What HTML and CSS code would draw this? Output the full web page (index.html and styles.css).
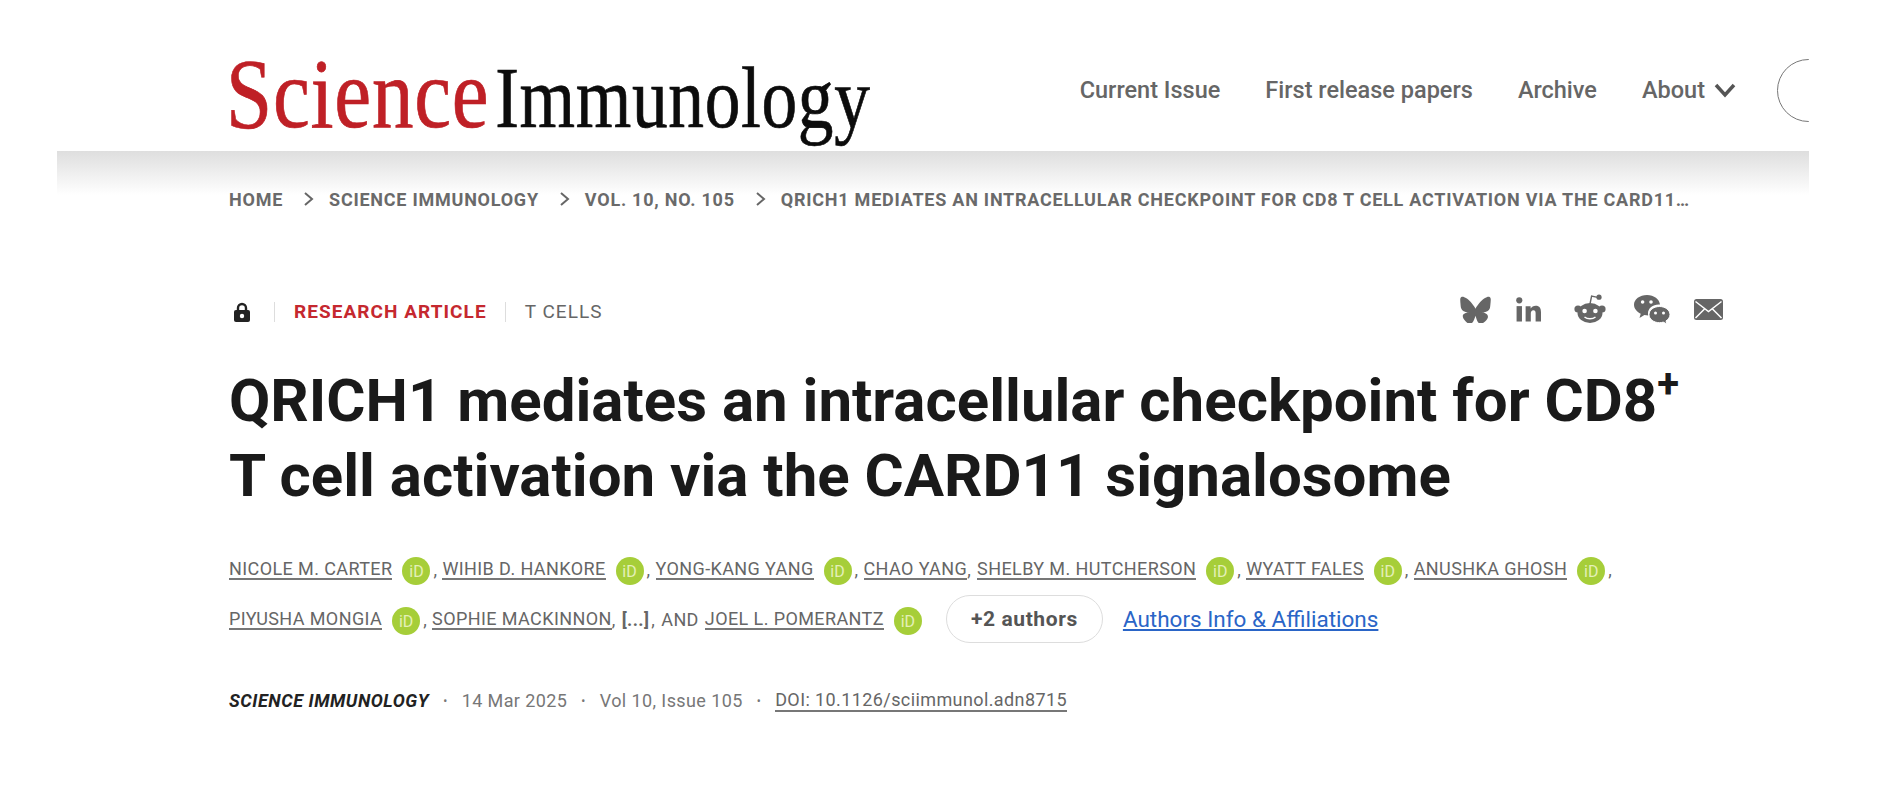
FILE: index.html
```html
<!DOCTYPE html>
<html lang="en">
<head>
  <meta charset="UTF-8">
  <title>QRICH1 mediates an intracellular checkpoint | Science Immunology</title>
  <link rel="stylesheet" href="styles.css">
</head>
<body>
  <div class="page">
    <header class="site-header">
      <a class="logo" href="#"><span class="logo-red">Science</span><span class="logo-black">Immunology</span></a>
      <nav class="main-nav">
        <a href="#">Current Issue</a>
        <a href="#">First release papers</a>
        <a href="#">Archive</a>
        <a href="#" class="nav-about">About
          <svg width="22" height="15" viewBox="0 0 22 15"><polyline points="2,2 11,12 20,2" fill="none" stroke="#555" stroke-width="3.5"/></svg>
        </a>
        <span class="nav-pill"></span>
      </nav>
    </header>

    <div class="crumbs">
      <a href="#">Home</a>
      <svg class="crumb-sep" width="12" height="16" viewBox="0 0 12 16"><polyline points="2,2 9,8 2,14" fill="none" stroke="#666" stroke-width="2"/></svg>
      <a href="#">Science Immunology</a>
      <svg class="crumb-sep" width="12" height="16" viewBox="0 0 12 16"><polyline points="2,2 9,8 2,14" fill="none" stroke="#666" stroke-width="2"/></svg>
      <a href="#">Vol. 10, No. 105</a>
      <svg class="crumb-sep" width="12" height="16" viewBox="0 0 12 16"><polyline points="2,2 9,8 2,14" fill="none" stroke="#666" stroke-width="2"/></svg>
      <span class="crumb-last">QRICH1 mediates an intracellular checkpoint for CD8 T cell activation via the CARD11…</span>
    </div>

    <main class="article">
      <div class="meta-row">
        <div class="tags">
          <svg class="lock" width="18" height="20" viewBox="0 0 18 20"><path d="M5 9V6a4 4 0 0 1 8 0v3" fill="none" stroke="#222" stroke-width="2.4"/><rect x="1" y="8" width="16" height="12" rx="2" fill="#222"/><circle cx="9" cy="14" r="2.2" fill="#fff"/></svg>
          <span class="tag tag-type">Research Article</span>
          <span class="tag tag-topic">T Cells</span>
        </div>
        <div class="share">
          <svg class="share-blue" width="31" height="28" viewBox="0 0 24 22"><path d="M12 10.8c-1.087-2.114-4.046-6.053-6.798-7.995C2.566.944 1.561 1.266.902 1.565.139 1.908 0 3.08 0 3.768c0 .69.378 5.65.624 6.479.815 2.736 3.713 3.66 6.383 3.364-3.912.58-7.387 2.005-2.83 7.078 5.013 5.19 6.87-1.113 7.823-4.308.953 3.195 2.05 9.271 7.733 4.308 4.267-4.308 1.172-6.498-2.74-7.078 2.67.297 5.568-.628 6.383-3.364.246-.828.624-5.79.624-6.479 0-.688-.139-1.861-.902-2.206-.659-.298-1.664-.62-4.3 1.24C16.046 4.748 13.087 8.687 12 10.8z" fill="#666"/></svg>
          <svg class="share-in" width="25" height="27" viewBox="0 0 26 27"><circle cx="3.4" cy="4" r="3.2" fill="#666"/><rect x=".6" y="10" width="5.6" height="16" fill="#666"/><path d="M10 10h5.2v2.4c1-1.7 3-2.9 5.2-2.9 4.2 0 5.6 2.7 5.6 6.8V26h-5.600v-8.600c0-2-.6-3.200-2.300-3.200-1.900 0-2.700 1.400-2.700 3.400V26H10z" fill="#666"/></svg>
          <svg class="share-reddit" width="32" height="30" viewBox="0 0 32 30"><circle cx="4" cy="15" r="3.600" fill="#666"/><circle cx="28" cy="15" r="3.600" fill="#666"/><ellipse cx="16" cy="19" rx="12.500" ry="10" fill="#666"/><path d="M16 10l1.600-8 6 1.400" fill="none" stroke="#666" stroke-width="1.400"/><circle cx="25" cy="3.200" r="2.600" fill="#666"/><circle cx="10.600" cy="17" r="2.300" fill="#fff"/><circle cx="21.400" cy="17" r="2.300" fill="#fff"/><path d="M10.500 23c3 2.400 8 2.400 11 0" fill="none" stroke="#fff" stroke-width="1.500"/></svg>
          <svg class="share-wechat" width="36" height="29" viewBox="0 0 36 29"><path d="M13 0c7 0 12.500 4.300 13 9.600-6.500-.6-12 3.400-12 8.900 0 .8.100 1.400.300 2.100-1.400 0-2.700-.2-3.900-.5L5.500 23l1.200-4.200C2.700 16.700 0 13.500 0 9.800 0 4.400 5.800 0 13 0z" fill="#666"/><path d="M25.500 11.500c5.800 0 10.500 3.600 10.500 8.100 0 2.600-1.600 4.800-4 6.300l.9 3.100-3.700-1.900c-1.200.4-2.400.6-3.700.6-5.800 0-10.500-3.600-10.500-8.100s4.700-8.100 10.500-8.100z" fill="#666" stroke="#fff" stroke-width="1"/><circle cx="8.600" cy="7" r="1.800" fill="#fff"/><circle cx="17" cy="7" r="1.800" fill="#fff"/><circle cx="21.500" cy="18" r="1.500" fill="#fff"/><circle cx="29.500" cy="18" r="1.500" fill="#fff"/></svg>
          <svg class="share-mail" width="29" height="21" viewBox="0 0 29 21"><rect width="29" height="21" rx="2.500" fill="#666"/><path d="M1.500 2.500l13 10 13-10M1.500 19l9-9M27.500 19l-9-9" fill="none" stroke="#fff" stroke-width="1.500"/></svg>
        </div>
      </div>

      <h1 class="title">QRICH1 mediates an intracellular checkpoint for CD8<sup>+</sup><br>T cell activation via the CARD11 signalosome</h1>

      <div class="authors">
        <div class="author-line">
          <a href="#">Nicole M. Carter</a><i class="orcid">iD</i><span>,</span>
          <a href="#">Wihib D. Hankore</a><i class="orcid">iD</i><span>,</span>
          <a href="#">Yong-Kang Yang</a><i class="orcid">iD</i><span>,</span>
          <a href="#">Chao Yang</a><span class="tight">,</span>
          <a href="#">Shelby M. Hutcherson</a><i class="orcid">iD</i><span>,</span>
          <a href="#">Wyatt Fales</a><i class="orcid">iD</i><span>,</span>
          <a href="#">Anushka Ghosh</a><i class="orcid">iD</i><span>,</span>
        </div>
        <div class="author-line">
          <a href="#">Piyusha Mongia</a><i class="orcid">iD</i><span>,</span>
          <a href="#">Sophie Mackinnon</a><span class="tight">,</span>
          <b class="ellipsis">[...]</b><span class="tight">,</span>
          <span class="and">and</span>
          <a href="#">Joel L. Pomerantz</a><i class="orcid">iD</i>
          <button class="more-btn">+2 authors</button>
          <a href="#" class="affil">Authors Info &amp; Affiliations</a>
        </div>
      </div>

      <div class="cite">
        <b>Science Immunology</b>
        <span class="dot">•</span>
        <span>14 Mar 2025</span>
        <span class="dot">•</span>
        <span>Vol 10, Issue 105</span>
        <span class="dot">•</span>
        <a href="#">DOI: 10.1126/sciimmunol.adn8715</a>
      </div>
    </main>
  </div>
</body>
</html>
```

FILE: styles.css
```css
body {
  margin: 0;
  background-color: #fff;
  font-family: Roboto, sans-serif;
  color: #666;
  overflow: hidden;
}
a {
  color: inherit;
  text-decoration: none;
}
.page {
  margin-left: 57px;
  width: 1752px;
  height: 803px;
  overflow: hidden;
}

/* Header */
.site-header {
  display: flex;
  align-items: center;
  justify-content: space-between;
  height: 151px;
  padding: 29px 0 0 172px;
  box-sizing: border-box;
}
.logo {
  display: flex;
  align-items: baseline;
  font-family: "Liberation Serif", serif;
  margin: 6px 0 0 -3px;
  white-space: nowrap;
  transform: scaleX(0.83);
  transform-origin: left;
  -webkit-text-stroke: 0.7px;
}
.logo-red {
  font-size: 100px;
  letter-spacing: 0.9px;
  color: #bf2026;
}
.logo-black {
  font-size: 86px;
  letter-spacing: 0.8px;
  color: #0c0c0c;
  margin-left: 7px;
}
.main-nav {
  display: flex;
  align-items: center;
  font-size: 23.5px;
  font-weight: 500;
  color: #666;
  margin-right: -32px;
}
.main-nav a {
  margin-right: 45px;
}
.nav-about {
  display: flex;
  align-items: center;
  gap: 9px;
  margin-right: 41px !important;
}
.nav-pill {
  width: 64px;
  height: 63px;
  border: 1.5px solid #777;
  border-radius: 32px;
  box-sizing: border-box;
}

/* Breadcrumbs */
.crumbs {
  display: flex;
  align-items: center;
  height: 46px;
  padding: 25px 0 0 172px;
  background: linear-gradient(#dedede, #fff 62%);
  font-size: 18px;
  font-weight: 700;
  letter-spacing: 0.76px;
  text-transform: uppercase;
  color: #6a6a6a;
  white-space: nowrap;
}
.crumb-sep {
  margin: 0 14px 0 20px;
}

/* Article head */
.article {
  padding: 0 172px;
}
.meta-row {
  display: flex;
  align-items: center;
  justify-content: space-between;
  margin-top: 72px;
  width: 1494px;
}
.tags {
  display: flex;
  align-items: center;
}
.lock {
  margin: 0 23px 0 4px;
}
.tag {
  font-size: 19px;
  text-transform: uppercase;
  letter-spacing: 1.05px;
  padding-left: 19px;
  border-left: 1px solid #ddd;
  line-height: 20px;
}
.tag-type {
  font-weight: 700;
  color: #c5282f;
  padding-right: 18px;
}
.tag-topic {
  color: #666;
}
.share {
  display: flex;
  align-items: center;
  margin-bottom: 6px;
}
.share-in {
  margin-left: 25px;
}
.share-reddit {
  margin-left: 33px;
}
.share-wechat {
  margin-left: 28px;
}
.share-mail {
  margin-left: 24px;
}
.title {
  margin: 33px 0 0;
  font-size: 60px;
  line-height: 75px;
  font-weight: 700;
  color: #1a1a1a;
  white-space: nowrap;
}
.title sup {
  font-size: 40px;
  line-height: 0;
  vertical-align: 24px;
}

/* Authors */
.authors {
  margin-top: 31px;
  font-size: 18px;
  letter-spacing: 0.4px;
  color: #666;
}
.author-line {
  display: flex;
  align-items: center;
  height: 50px;
  white-space: nowrap;
  text-transform: uppercase;
}
.author-line > a {
  border-bottom: 2px solid #777;
  line-height: 19px;
}
.author-line > span {
  margin: 0 5px 0 3px;
}
.author-line > .tight {
  margin: 0 6px 0 0;
}
.orcid {
  display: inline-block;
  width: 28px;
  height: 28px;
  margin: 4px 0 0 10px;
  border-radius: 50%;
  background-color: #a6ce39;
  color: #e4f0b8;
  font-style: normal;
  font-size: 16px;
  line-height: 29px;
  letter-spacing: 0;
  text-align: center;
  text-transform: none;
}
.ellipsis {
  font-weight: 700;
  margin-right: 2px;
}
.and {
  margin: 0 !important;
  padding-right: 6px;
}
.more-btn {
  height: 48px;
  width: 157px;
  margin-left: 24px;
  background-color: #fff;
  border: 1.5px solid #ddd;
  border-radius: 24px;
  font-family: Roboto, sans-serif;
  font-size: 21px;
  font-weight: 700;
  letter-spacing: 0.6px;
  color: #555;
}
.affil {
  margin-left: 20px;
  border: 0 !important;
  font-size: 22.5px;
  letter-spacing: 0;
  color: #2a65c7;
  text-decoration: underline;
  text-transform: none;
}

/* Citation line */
.cite {
  display: flex;
  align-items: center;
  margin-top: 45px;
  font-size: 18px;
  letter-spacing: 0.4px;
  color: #777;
}
.cite b {
  font-style: italic;
  letter-spacing: 0.55px;
  text-transform: uppercase;
  color: #222;
}
.dot {
  font-size: 12px;
  margin: 0 14px;
}
.cite a {
  border-bottom: 2px solid #777;
  color: #666;
}
```
